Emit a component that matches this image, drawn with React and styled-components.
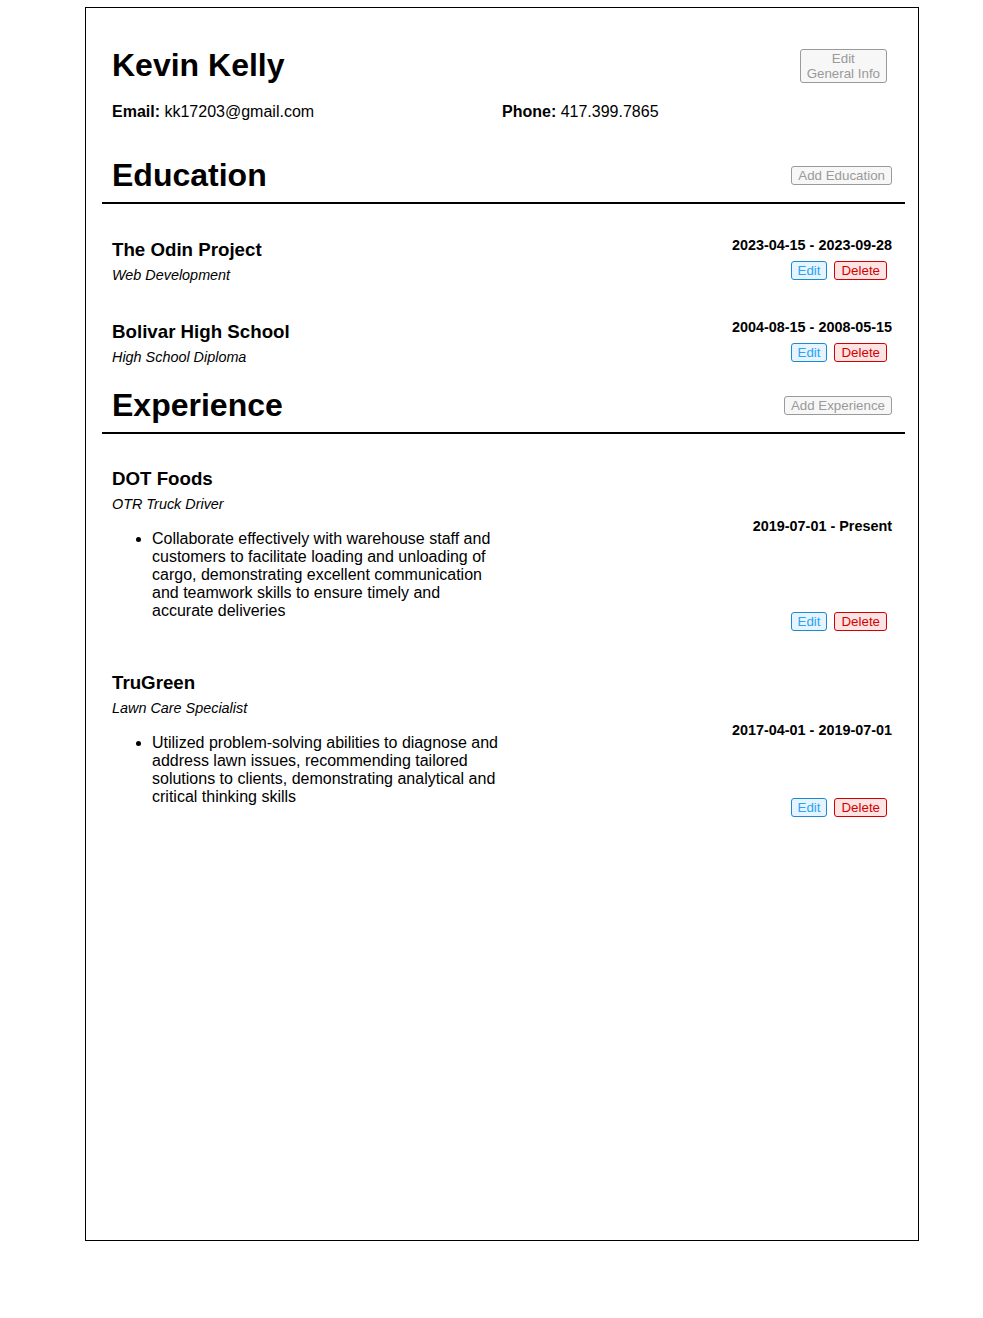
import React from "react";
import styled, { createGlobalStyle } from "styled-components";

const GlobalStyle = createGlobalStyle`
  body {
    margin: 0;
    font-family: "Liberation Sans", Arial, sans-serif;
    color: #000;
    background: #fff;
  }
`;

const Page = styled.div`
  box-sizing: border-box;
  width: 834px;
  height: 1234px;
  margin: 7px 0 0 85px;
  border: 1px solid #000;
  padding: 39px 13px 0 16px;
`;

const Header = styled.header`
  padding: 0 13px 18px 10px;
`;

const TopRow = styled.div`
  display: flex;
  align-items: center;
  justify-content: space-between;
`;

const Name = styled.h1`
  margin: 0;
  font-size: 32px;
  font-weight: bold;
`;

const Contact = styled.div`
  display: grid;
  grid-template-columns: 1fr 1fr;
  margin-top: 19px;
  font-size: 16px;
`;

const Button = styled.button`
  font-family: "Liberation Sans", Arial, sans-serif;
  font-size: 13.333px;
  line-height: normal;
  padding: 1px 6px;
  border-radius: 3px;
  border: 1px solid #9a9a9a;
  background: #f7f7f7;
  color: #9a9a9a;
  cursor: pointer;
`;

const InfoButton = styled(Button)`
  margin-right: 5px;
`;

const EditButton = styled(Button)`
  border-color: #1b8ad0;
  background: #e5f4ff;
  color: #2aa3f5;
`;

const DeleteButton = styled(Button)`
  border-color: #d40000;
  background: #fde4e4;
  color: #d40000;
  margin-left: 7px;
`;

const Section = styled.section`
  margin-top: 18px;
`;

const SectionHead = styled.div`
  display: flex;
  align-items: center;
  justify-content: space-between;
  padding: 0 13px 8px 10px;
  border-bottom: 2px solid #000;
`;

const SectionTitle = styled.h2`
  margin: 0;
  font-size: 32px;
  font-weight: bold;
`;

const Entries = styled.div`
  padding: 0 13px 1px 10px;
`;

const Entry = styled.div`
  margin-top: 35px;
  display: flex;
  align-items: flex-start;
  justify-content: space-between;
`;

const Job = styled.div`
  margin-top: 34px;
`;

const Main = styled.div`
  padding-bottom: 3px;
`;

const Title = styled.h3`
  margin: 0;
  font-size: 18.72px;
  font-weight: bold;
`;

const Subtitle = styled.p`
  margin: 6px 0 0;
  font-size: 14.4px;
  font-style: italic;
`;

const Side = styled.div`
  display: flex;
  flex-direction: column;
  align-items: flex-end;
  justify-content: ${(p) => (p.$spread ? "space-between" : "flex-start")};
  gap: ${(p) => (p.$spread ? "0" : "7.5px")};
  margin-top: ${(p) => (p.$spread ? "0" : "-2px")};
  padding: ${(p) => (p.$spread ? "6px 0 7px" : "0")};
`;

const Dates = styled.div`
  font-size: 14.4px;
  font-weight: bold;
`;

const Actions = styled.div`
  display: flex;
  margin-right: 5px;
`;

const Body = styled.div`
  display: grid;
  grid-template-columns: 1fr 1fr;
`;

const Duties = styled.ul`
  margin: 18px 0;
  padding-left: 40px;
  font-size: 16px;
`;

const education = [
  {
    school: "The Odin Project",
    study: "Web Development",
    from: "2023-04-15",
    to: "2023-09-28",
  },
  {
    school: "Bolivar High School",
    study: "High School Diploma",
    from: "2004-08-15",
    to: "2008-05-15",
  },
];

const experience = [
  {
    company: "DOT Foods",
    position: "OTR Truck Driver",
    from: "2019-07-01",
    to: "Present",
    duties: [
      "Collaborate effectively with warehouse staff and customers to facilitate loading and unloading of cargo, demonstrating excellent communication and teamwork skills to ensure timely and accurate deliveries",
    ],
  },
  {
    company: "TruGreen",
    position: "Lawn Care Specialist",
    from: "2017-04-01",
    to: "2019-07-01",
    duties: [
      "Utilized problem-solving abilities to diagnose and address lawn issues, recommending tailored solutions to clients, demonstrating analytical and critical thinking skills",
    ],
  },
];

const EntryActions = () => (
  <Actions>
    <EditButton>Edit</EditButton>
    <DeleteButton>Delete</DeleteButton>
  </Actions>
);

const App = () => {
  return (
    <>
      <GlobalStyle />
      <Page>
        <Header>
          <TopRow>
            <Name>Kevin Kelly</Name>
            <InfoButton>
              Edit
              <br />
              General Info
            </InfoButton>
          </TopRow>
          <Contact>
            <div>
              <b>Email:</b> kk17203@gmail.com
            </div>
            <div>
              <b>Phone:</b> 417.399.7865
            </div>
          </Contact>
        </Header>

        <Section>
          <SectionHead>
            <SectionTitle>Education</SectionTitle>
            <Button>Add Education</Button>
          </SectionHead>
          <Entries>
            {education.map((x) => (
              <Entry key={x.school}>
                <Main>
                  <Title>{x.school}</Title>
                  <Subtitle>{x.study}</Subtitle>
                </Main>
                <Side>
                  <Dates>
                    {x.from} - {x.to}
                  </Dates>
                  <EntryActions />
                </Side>
              </Entry>
            ))}
          </Entries>
        </Section>

        <Section>
          <SectionHead>
            <SectionTitle>Experience</SectionTitle>
            <Button>Add Experience</Button>
          </SectionHead>
          <Entries>
            {experience.map((x) => (
              <Job key={x.company}>
                <Title>{x.company}</Title>
                <Subtitle>{x.position}</Subtitle>
                <Body>
                  <Duties>
                    {x.duties.map((d) => (
                      <li key={d}>{d}</li>
                    ))}
                  </Duties>
                  <Side $spread>
                    <Dates>
                      {x.from} - {x.to}
                    </Dates>
                    <EntryActions />
                  </Side>
                </Body>
              </Job>
            ))}
          </Entries>
        </Section>
      </Page>
    </>
  );
};

export default App;
